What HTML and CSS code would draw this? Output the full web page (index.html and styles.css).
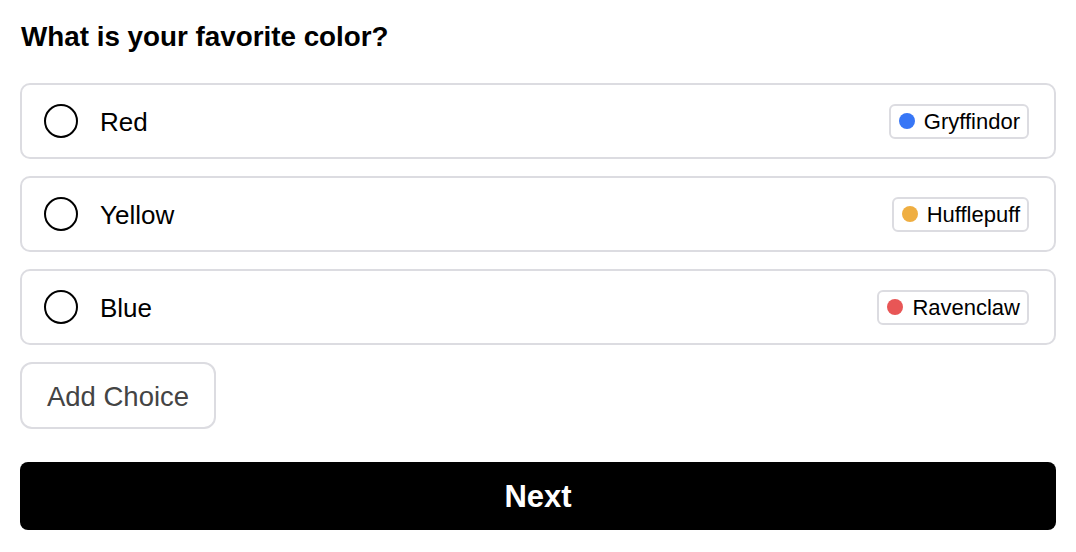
FILE: index.html
```html
<!DOCTYPE html>
<html lang="en">
<head>
<meta charset="utf-8">
<title>Favorite color</title>
<link rel="stylesheet" href="styles.css">
</head>
<body>
<main class="poll">
  <h1 class="question">What is your favorite color?</h1>
  <ul class="choices">
    <li class="choice">
      <span class="radio"></span>
      <span class="label">Red</span>
      <span class="badge"><span class="dot dot-blue"></span><span class="badge-text">Gryffindor</span></span>
    </li>
    <li class="choice">
      <span class="radio"></span>
      <span class="label">Yellow</span>
      <span class="badge"><span class="dot dot-yellow"></span><span class="badge-text">Hufflepuff</span></span>
    </li>
    <li class="choice">
      <span class="radio"></span>
      <span class="label">Blue</span>
      <span class="badge"><span class="dot dot-red"></span><span class="badge-text">Ravenclaw</span></span>
    </li>
  </ul>
  <button class="add-btn" type="button">Add Choice</button>
  <button class="next-btn" type="button">Next</button>
</main>
</body>
</html>
```
FILE: styles.css
```css
* { box-sizing: border-box; }
html, body { margin: 0; padding: 0; background: #fff; }
body {
  font-family: "Liberation Sans", Arial, Helvetica, sans-serif;
  color: #000;
}
.poll {
  padding: 21px 20px 0 20px;
  display: flex;
  flex-direction: column;
}
.question {
  margin: 0 0 0 1px;
  font-size: 27.8px;
  line-height: 32px;
  font-weight: 700;
  letter-spacing: 0;
}
.choices {
  list-style: none;
  margin: 30px 0 0 0;
  padding: 0;
  display: flex;
  flex-direction: column;
  gap: 17px;
}
.choice {
  height: 76px;
  border: 2px solid #dcdce1;
  border-radius: 10px;
  display: flex;
  align-items: center;
  padding: 0 25px 0 22px;
}
.radio {
  width: 34px;
  height: 34px;
  border: 2px solid #000;
  border-radius: 50%;
  flex: none;
}
.label {
  margin-left: 22px;
  padding-top: 2px;
  font-size: 26px;
  flex: 1;
}
.badge {
  display: flex;
  align-items: center;
  height: 35px;
  border: 2px solid #dcdce1;
  border-radius: 6px;
  padding: 0 7px 0 8px;
  font-size: 22px;
  gap: 9px;
}
.badge-text { padding-top: 2px; }
.dot {
  width: 16px;
  height: 16px;
  border-radius: 50%;
  flex: none;
}
.dot-blue { background: #3776f6; }
.dot-yellow { background: #efae41; }
.dot-red { background: #e85656; }
.add-btn {
  align-self: flex-start;
  margin-top: 17px;
  width: 196px;
  height: 67px;
  border: 2px solid #dcdce1;
  border-radius: 12px;
  background: #fff;
  color: #444;
  font-family: inherit;
  font-size: 27.5px;
  padding: 2px 0 0 0;
}
.next-btn {
  margin-top: 33px;
  height: 68px;
  border: none;
  border-radius: 8px;
  background: #000;
  color: #fff;
  font-family: inherit;
  font-size: 31px;
  font-weight: 700;
  padding: 2px 0 0 0;
}
```
